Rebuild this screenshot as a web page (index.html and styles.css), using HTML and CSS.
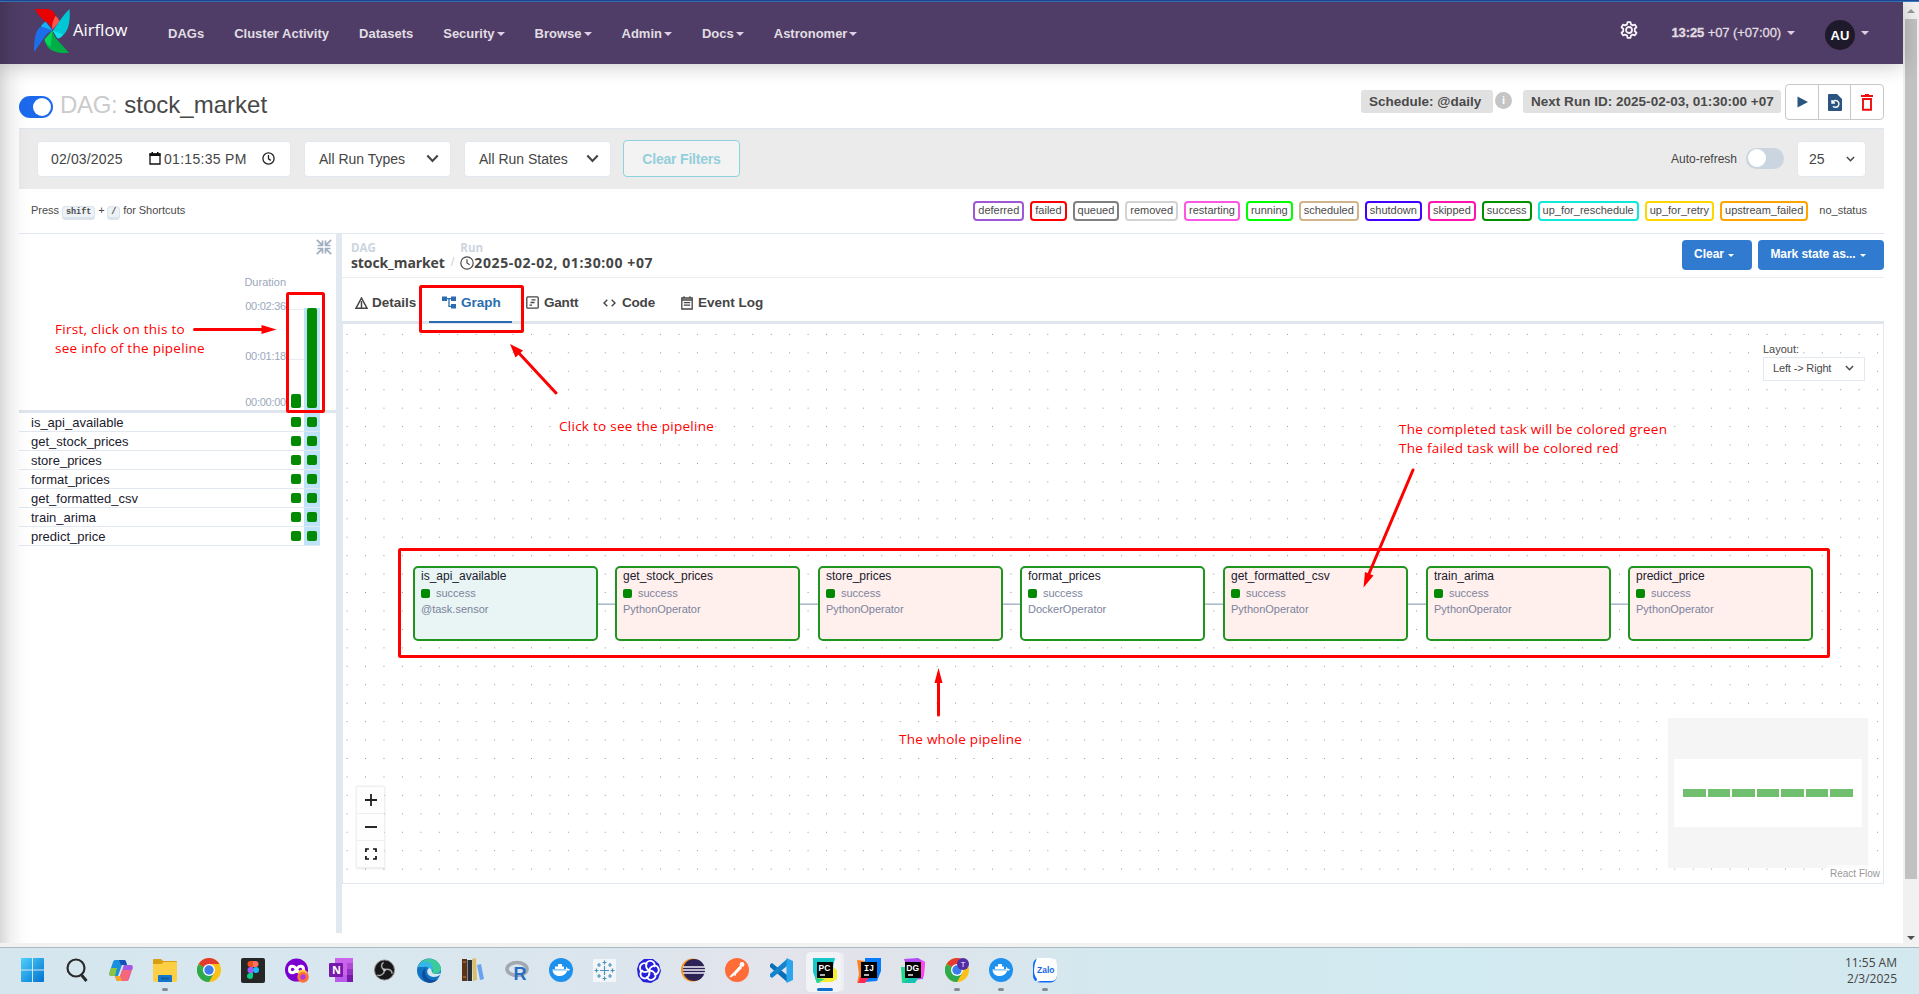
FILE: index.html
```html
<!DOCTYPE html>
<html lang="en">
<head>
<meta charset="utf-8">
<title>stock_market - Graph - Airflow</title>
<link rel="stylesheet" href="styles.css">
</head>
<body>
<svg class="defs" width="0" height="0">
  <symbol id="chev" viewBox="0 0 12 8"><path d="M1.2 1.2 6 6.2l4.800-5" fill="none" stroke="currentColor" stroke-width="2"/></symbol>
  <symbol id="chrome" viewBox="0 0 24 24">
    <circle cx="12" cy="12" r="12" fill="#fbc116"/>
    <path d="M12 12 1.600 6A12 12 0 0 1 22.400 6H12z" fill="#e33b2e"/>
    <path d="M1.600 6A12 12 0 0 0 12 24l5.200-9H6.800z" fill="#2da94f"/>
    <path d="M6.800 9 1.600 6 6.800 15z" fill="#2da94f"/>
    <circle cx="12" cy="12" r="6" fill="#fff"/><circle cx="12" cy="12" r="4.700" fill="#3b7ded"/>
  </symbol>
  <symbol id="docker" viewBox="0 0 24 24">
    <circle cx="12" cy="12" r="12" fill="#1d91ed"/>
    <path d="M3.500 11.500H16c1 0 1.300-.8 1-2.600 1 .4 1.600 1.200 1.700 2 1-.2 1.700 0 2.300.5-.6 1-1.600 1.400-2.800 1.400-1.400 3.700-4.200 5.200-7.700 5.200-4.400 0-6.800-2.500-7-6.500z" fill="#fff"/>
    <path d="M6 8.500h9V11H6zM9 6h4v2.500H9z" fill="#fff"/>
    <path d="M4 12.500h15" stroke="#8cc8f7" stroke-width=".6"/>
  </symbol>
</svg>
<div class="screen">
  <div class="topline"></div>
  <div class="browser">
    <div class="page">
      <nav class="navbar">
        <a class="brand">
          <svg width="37" height="45" viewBox="0 0 37 45">
            <path d="M1 0h13c6 1 8 5 9 9 2 2 3 3 3 4l-7 8C17 13 8 14 1 0z" fill="#e90000"/>
            <path d="M22 7c3 2 4 4 4 6l-7 8c-1-4 0-8 3-14z" fill="#ff554a"/>
            <path d="M36.500 0c1 12-1 22-6 26-2 2-4 4-6 4l-5-8c3-4 9-14 17-22z" fill="#00c7d4"/>
            <path d="M19 22l11 4c-2 3-4 4-6 4z" fill="#11e1ee"/>
            <path d="M36 45c-9 1-18-1-22-6-2-3-3-6-3-8l8-9c1 8 10 14 17 23z" fill="#00ad46"/>
            <path d="M19 22l-2 17c-4-3-6-5-6-8z" fill="#04d659"/>
            <path d="M0 44C0 33 1 22 7 18l12 4C12 24 7 36 0 44z" fill="#1b6fea"/>
            <path d="M7 18c2-3 3-4 5-5l7 9z" fill="#12b0ff"/>
          </svg>
          <span class="brand-name">Airflow</span>
        </a>
        <ul class="menu">
          <li>DAGs</li><li>Cluster Activity</li><li>Datasets</li>
          <li>Security<i class="caret"></i></li><li>Browse<i class="caret"></i></li><li>Admin<i class="caret"></i></li>
          <li>Docs<i class="caret"></i></li><li>Astronomer<i class="caret"></i></li>
        </ul>
        <div class="nav-right">
          <svg class="gear" width="18" height="18" viewBox="0 0 24 24" fill="none" stroke="#f5f2f8" stroke-width="2.400" stroke-linejoin="round"><circle cx="12" cy="12" r="4"/><path d="M10 1.500h4l.6 3 2.400 1.300 3-1 2 3.500-2.300 2v3.400l2.300 2-2 3.500-3-1-2.400 1.300-.6 3h-4l-.6-3L7 18.200l-3 1-2-3.500 2.300-2v-3.400L2 8.300l2-3.500 3 1 2.400-1.300z"/></svg>
          <span class="clock"><b>13:25</b> +07 (+07:00)<i class="caret"></i></span>
          <span class="avatar">AU</span><i class="caret"></i>
        </div>
      </nav>

      <header class="dag-head">
        <div class="dag-name"><span class="switch on"></span><h1><span>DAG:</span> stock_market</h1></div>
        <div class="dag-meta">
          <span class="label sched">Schedule: @daily</span><span class="info">i</span>
          <span class="label next">Next Run ID: 2025-02-03, 01:30:00 +07</span>
          <div class="btn-group">
            <span><svg width="12" height="12" viewBox="0 0 12 12"><path d="M1.500.5 12 6 1.500 11.500z" fill="#2b5580"/></svg></span>
            <span><svg width="14" height="17" viewBox="0 0 14 17"><path d="M1 0h8l5 5v11q0 1-1 1H1q-1 0-1-1V1q0-1 1-1z" fill="#2b5580"/><path d="M4 6v3h3M4.300 8.800A3.400 3.400 0 1 1 5 12.200" fill="none" stroke="#fff" stroke-width="1.400"/></svg></span>
            <span><svg width="12" height="17" viewBox="0 0 12 17"><path d="M0 2h12M4 .8h4M2 5v10.800h8V5z" fill="none" stroke="#f00d0d" stroke-width="1.900"/></svg></span>
          </div>
        </div>
      </header>

      <section class="filters">
        <div class="field when">
          <span class="date">02/03/2025</span>
          <svg width="12" height="13" viewBox="0 0 12 13"><path d="M1 2h10v10H1z" fill="none" stroke="#111" stroke-width="1.300"/><path d="M.5 1.500h11V4H.5zM2.500 0h1.500v2H2.500zM8 0h1.500v2H8z" fill="#111"/></svg>
          <span class="time">01:15:35 PM</span>
          <svg width="13" height="13" viewBox="0 0 13 13" fill="none" stroke="#222" stroke-width="1.300"><circle cx="6.500" cy="6.500" r="5.600"/><path d="M6.500 3v3.800l2.300 1.600"/></svg>
        </div>
        <div class="field sel">All Run Types<svg width="13" height="9"><use href="#chev"/></svg></div>
        <div class="field sel">All Run States<svg width="13" height="9"><use href="#chev"/></svg></div>
        <button class="clear-filters">Clear Filters</button>
        <div class="filters-right">
          <span>Auto-refresh</span><span class="switch off"></span>
          <div class="field num">25<svg width="9" height="6"><use href="#chev"/></svg></div>
        </div>
      </section>

      <section class="legend">
        <div class="hint">Press <kbd>shift</kbd> + <kbd>/</kbd> for Shortcuts</div>
        <div class="badges">
          <span class="b deferred">deferred</span><span class="b failed">failed</span><span class="b queued">queued</span><span class="b removed">removed</span><span class="b restarting">restarting</span><span class="b running">running</span><span class="b scheduled">scheduled</span><span class="b shutdown">shutdown</span><span class="b skipped">skipped</span><span class="b success">success</span><span class="b resched">up_for_reschedule</span><span class="b retry">up_for_retry</span><span class="b upfailed">upstream_failed</span><span class="b none">no_status</span>
        </div>
      </section>

      <main class="main">
        <aside class="grid-panel">
          <svg class="collapse" width="16" height="16" viewBox="0 0 16 16" fill="none" stroke="#a0aec0" stroke-width="1.700"><path d="M.8.8l5.400 5.400M6.500 1.500v5h-5M15.200.8 9.800 6.200M9.500 1.500v5h5M.8 15.200l5.400-5.400M6.500 14.500v-5h-5M15.200 15.200 9.800 9.800M9.500 14.500v-5h5"/></svg>
          <div class="durations">
            <div class="scale"><span>Duration</span><span>00:02:36</span><span>00:01:18</span><span>00:00:00</span></div>
            <div class="bars"><div class="col"><i class="short"></i></div><div class="col sel-col"><i class="tall"></i></div></div>
          </div>
          <ul class="tasks">
            <li><span>is_api_available</span><b></b><b></b></li>
            <li><span>get_stock_prices</span><b></b><b></b></li>
            <li><span>store_prices</span><b></b><b></b></li>
            <li><span>format_prices</span><b></b><b></b></li>
            <li><span>get_formatted_csv</span><b></b><b></b></li>
            <li><span>train_arima</span><b></b><b></b></li>
            <li><span>predict_price</span><b></b><b></b></li>
          </ul>
        </aside>
        <div class="divider"></div>
        <section class="details">
          <div class="crumbs">
            <div class="crumb"><small>DAG</small><strong>stock_market</strong></div>
            <span class="slash">/</span>
            <div class="crumb run-id"><small>Run</small><strong><svg width="14" height="14" viewBox="0 0 14 14" fill="none" stroke="#4a4a4a" stroke-width="1.200"><circle cx="7" cy="7" r="6.200"/><path d="M7 3.200V7l2.600 1.800"/></svg>2025-02-02, 01:30:00 +07</strong></div>
            <div class="actions"><button>Clear<i class="caret"></i></button><button>Mark state as...<i class="caret"></i></button></div>
          </div>
          <div class="tabs">
            <span class="tab t-details"><svg width="13" height="12" viewBox="0 0 13 12"><path d="M6.500 1 12 11.200H1z" fill="none" stroke="#444" stroke-width="1.500"/><path d="M6.500 4v7" stroke="#444" stroke-width="1.500"/></svg>Details</span>
            <span class="tab t-graph"><svg width="14" height="13" viewBox="0 0 14 13"><path d="M0 .5h5V5H0zM9 .5h5V5H9zM9 8h5v4.500H9z" fill="#2b6cb0"/><path d="M5 2.700h4M7 2.700v7.600h2" fill="none" stroke="#2b6cb0" stroke-width="1.300"/></svg>Graph</span>
            <span class="tab t-gantt"><svg width="13" height="13" viewBox="0 0 13 13" fill="none" stroke="#444" stroke-width="1.300"><rect x=".8" y=".8" width="11.400" height="11.400" rx="1"/><path d="M5.500 3.800h4M4.500 6.500h4M3.500 9.200H6"/></svg>Gantt</span>
            <span class="tab t-code"><svg width="13" height="8" viewBox="0 0 13 8" fill="none" stroke="#444" stroke-width="1.400"><path d="M4.300.7 1 4l3.300 3.300M8.700.7 12 4 8.700 7.300"/></svg>Code</span>
            <span class="tab t-event"><svg width="12" height="14" viewBox="0 0 12 14" fill="none" stroke="#444" stroke-width="1.300"><path d="M.8 2h10.400v11H.8zM.8 4h10.400M3 .3v2M9 .3v2M2.800 6.700h6.400M2.800 9.200h6.400"/></svg>Event Log</span>
          </div>
          <div class="canvas">
            <svg class="dots" width="1539" height="559"><defs><pattern id="dotp" x="3.600" y="9.900" width="18.440" height="18.440" patternUnits="userSpaceOnUse"><circle cx=".5" cy=".5" r=".52" fill="#85858c"/></pattern></defs><rect width="1539" height="559" fill="url(#dotp)"/></svg>
            <div class="edge"></div>
            <div class="node sensor n1"><h4>is_api_available</h4><p><i></i>success</p><p>@task.sensor</p></div>
            <div class="node py n2"><h4>get_stock_prices</h4><p><i></i>success</p><p>PythonOperator</p></div>
            <div class="node py n3"><h4>store_prices</h4><p><i></i>success</p><p>PythonOperator</p></div>
            <div class="node dk n4"><h4>format_prices</h4><p><i></i>success</p><p>DockerOperator</p></div>
            <div class="node py n5"><h4>get_formatted_csv</h4><p><i></i>success</p><p>PythonOperator</p></div>
            <div class="node py n6"><h4>train_arima</h4><p><i></i>success</p><p>PythonOperator</p></div>
            <div class="node py n7"><h4>predict_price</h4><p><i></i>success</p><p>PythonOperator</p></div>
            <div class="layout-pick"><label>Layout:</label><div>Left -&gt; Right<svg width="9" height="6"><use href="#chev"/></svg></div></div>
            <div class="controls">
              <span><svg width="12" height="12"><path d="M6 0v12M0 6h12" stroke="#222" stroke-width="1.800"/></svg></span>
              <span><svg width="12" height="12"><path d="M0 6h12" stroke="#111" stroke-width="1.800"/></svg></span>
              <span><svg width="12" height="12" fill="none" stroke="#111" stroke-width="1.700"><path d="M.9 4V1h3M8 1h3v3M11 8v3H8M4 11H.9V8"/></svg></span>
            </div>
            <div class="minimap"><div><i></i><i></i><i></i><i></i><i></i><i></i><i></i></div></div>
            <span class="attrib">React Flow</span>
          </div>
        </section>
      </main>
    </div>
    <div class="scrollbar"><i class="up"></i><i class="thumb"></i><i class="down"></i></div>
  </div>
  <div class="strip"></div>
  <footer class="taskbar">
    <div class="apps">
      <span><svg width="23" height="24" viewBox="0 0 23 24"><defs><linearGradient id="wg" x1="0" y1="0" x2="1" y2="1"><stop offset="0" stop-color="#4fd0fb"/><stop offset="1" stop-color="#0072cf"/></linearGradient></defs><path d="M1 0h10v11.500H0V1q0-1 1-1zM12 0h10q1 0 1 1v10.500H12zM0 12.500h11V24H1q-1 0-1-1zM12 12.500h11V23q0 1-1 1H12z" fill="url(#wg)"/></svg></span>
      <span><svg width="24" height="24" viewBox="0 0 24 24" fill="none" stroke="#2a2a2a" stroke-width="2.200"><circle cx="11" cy="10" r="8.500"/><path d="M16.500 17l5 6" stroke-width="3"/></svg></span>
      <span><svg width="24" height="23" viewBox="0 0 24 23"><path d="M6 1h9c2 0 2 2 3 5h-5L9 17H3c-3 0-3-2-2-5L4 3c.4-1.300 1-2 2-2z" fill="#1a8fdc"/><path d="M2 9h6l-2 8H3c-3 0-3-2-2-5z" fill="#8cc63f"/><path d="M10 1h5c2 0 2 2 3 5h-6z" fill="#1450b8"/><path d="M18 22H9c-2 0-2-2-3-5h5L15 6h6c3 0 3 2 2 5l-3 9c-.4 1.300-1 2-2 2z" fill="#e255a5"/><path d="M6 17h6l2 5H9c-2 0-2-2-3-5z" fill="#f5a623"/><path d="M15 6h6c3 0 3 2 2 5h-9z" fill="#a457e8"/><path d="M11 17l2-6h9l-3 9c-.4 1.300-1 2-2 2h-4z" fill="#f4687a"/></svg></span>
      <span class="run"><svg width="24" height="23" viewBox="0 0 24 23"><path d="M1 0h7l2 2h13q1 0 1 1v8H0V1q0-1 1-1z" fill="#d99d10"/><path d="M0 5h8l3-2h12q1 0 1 1v17q0 2-2 2H2q-2 0-2-2z" fill="#fdcf45"/><path d="M5 23v-6q0-1 1-1h12q1 0 1 1v6z" fill="#1277cc"/><path d="M8 19.500h8" stroke="#0b5596" stroke-width="1.500"/></svg></span>
      <span><svg width="24" height="24"><use href="#chrome"/></svg></span>
      <span><svg width="24" height="25" viewBox="0 0 24 25"><rect width="24" height="25" rx="2" fill="#262626"/><path d="M12 3H9.500a3 3 0 0 0 0 6H12z" fill="#f24e1e"/><path d="M12 3h2.500a3 3 0 0 1 0 6H12z" fill="#ff7262"/><path d="M12 9H9.500a3 3 0 0 0 0 6H12z" fill="#a259ff"/><circle cx="15" cy="12" r="3" fill="#1abcfe"/><path d="M12 15H9.500a3 3 0 1 0 2.500 3z" fill="#0acf83"/></svg></span>
      <span><svg width="24" height="25" viewBox="0 0 24 25"><circle cx="11.500" cy="12" r="11.500" fill="#7b00cf"/><path d="M11.500 11.500C9 7 4.500 7.500 4.500 11.500s4.500 4.500 7 0 7-4 7 0-4.500 4.500-7 0z" fill="none" stroke="#fff" stroke-width="3"/><circle cx="18" cy="19" r="5.800" fill="#ff7139"/><circle cx="18" cy="19" r="2.700" fill="#b23be0"/><path d="M13 15q5-5 9 0" stroke="#ffcf36" stroke-width="2" fill="none"/></svg></span>
      <span><svg width="24" height="24" viewBox="0 0 24 24"><path d="M6 0h18v24H6z" fill="#ca64ea"/><path d="M18 5h6v6h-6z" fill="#ae4bd5"/><path d="M18 11h6v6h-6z" fill="#9332bf"/><path d="M18 17h6v7h-6z" fill="#7719aa"/><path d="M6 17h12v7H6z" fill="#b75be8"/><rect y="5" width="14" height="14" rx="1" fill="#7719aa"/><text x="3" y="16" font-family="Open Sans" font-weight="700" font-size="11" fill="#fff">N</text></svg></span>
      <span><svg width="21" height="22" viewBox="0 0 22 22"><circle cx="11" cy="11" r="10.500" fill="#17171a" stroke="#888" /><path d="M11 11C7 9 7 5 10 3M11 11c4-2 8 0 8 4M11 11c0 4-4 7-7.500 5" fill="none" stroke="#a8a8a8" stroke-width="1.500"/><circle cx="11" cy="11" r="1.500" fill="#c8c8c8"/></svg></span>
      <span><svg width="24" height="25" viewBox="0 0 24 25"><circle cx="12" cy="12.500" r="12" fill="#1173c4"/><path d="M1 9C4-1 20-3 24 10c0 6-6 7-9 5 2-4-2-8-6-7-4 0-7 1-8 1z" fill="#3ccb9a"/><path d="M1 9c3-7 11-7 14-2 1 2 1 5-1 7-1-4-4-6-7-5z" fill="#36b5e8"/><path d="M9 10c-3 4 0 12 7 12 3 0 5-1 6-2-2 3-6 5-10 5-8-2-9-12-3-15z" fill="#0d4d9b"/><path d="M12 10c-4 3-1 9 5 9 2 0 4-1 6-2l1-2c-4 2-9 1-9-1-1-2 0-3-3-4z" fill="#d6e8f2"/></svg></span>
      <span><svg width="22" height="24" viewBox="0 0 22 24"><path d="M0 1h5v22H0z" fill="#5c3317"/><path d="M1 4h3M1 19h3M6 5h3M6 19h3" stroke="#c58b45"/><path d="M5.500 2h4.500v21H5.500z" fill="#27303a"/><path d="M10 1l4-1 1 22-4 1z" fill="#d9bd6c"/><path d="M15 7l4-1 3 15-4 1z" fill="#6ba2f0"/></svg></span>
      <span><svg width="24" height="25" viewBox="0 -2 24 25"><ellipse cx="12" cy="9" rx="10" ry="6.500" fill="none" stroke="#a2a8b0" stroke-width="3.600"/><text x="8.500" y="19.500" font-family="Liberation Sans" font-weight="700" font-size="18" fill="#276dc3">R</text></svg></span>
      <span><svg width="24" height="24"><use href="#docker"/></svg></span>
      <span><svg width="23" height="23" viewBox="0 0 23 23"><path d="M0 0h23v23H0z" fill="#f3f6f8"/><path d="M11.500 7v9M7 11.500h9M11.500 1.500v4M9.500 3.500h4M11.500 17.500v4M9.500 19.500h4M1.500 11.500h4M3.500 9.500v4M17.500 11.500h4M19.500 9.500v4M6 4v4M4 6h4M17 4v4M15 6h4M6 15v4M4 17h4M17 15v4M15 17h4" stroke="#4c93bd" stroke-width="1.200"/></svg></span>
      <span><svg width="24" height="25" viewBox="0 0 24 25"><path d="M7 1h9l6 5 2 7-3 8-7 4-8-1-5-6-1-7 2-6z" fill="#2420dc"/><g fill="none" stroke="#fff" stroke-width="1.800"><path id="petal" d="M12 12.500C8 10 8 4 12 3s7 3 5 6"/><use href="#petal" transform="rotate(72 12 12.500)"/><use href="#petal" transform="rotate(144 12 12.500)"/><use href="#petal" transform="rotate(216 12 12.500)"/><use href="#petal" transform="rotate(288 12 12.500)"/></g></svg></span>
      <span><svg width="24" height="24" viewBox="0 0 24 24"><circle cx="11.500" cy="12" r="11.500" fill="#f7941e"/><circle cx="13" cy="12" r="11" fill="#2c2255"/><path d="M2 9h22M2 12h22M2 15h22" stroke="#f2eef8" stroke-width="1.700"/></svg></span>
      <span><svg width="24" height="24" viewBox="0 0 24 24"><circle cx="12" cy="12" r="12" fill="#ff6c37"/><circle cx="17" cy="6.500" r="2.400" fill="#fff"/><path d="M15 8l1.500 2-5 5L6 19l-1-.5 5-5zM11 15l-1 3" fill="#fff" stroke="#fff"/></svg></span>
      <span><svg width="24" height="25" viewBox="0 0 24 25"><path d="M1 6.500 3 5l15 12v7L1 9z" fill="#0b6fb5"/><path d="M1 18.500 3 20 18 8V1L1 16z" fill="#1384cd"/><path d="M17.500 0 24 3v19l-6.500 3z" fill="#2aa5ee"/></svg></span>
      <span class="active"><svg width="24" height="25" viewBox="0 0 24 25"><path d="M0 0h22l-2 9 4 4v8L4 25 0 14z" fill="#16c6c9"/><path d="M18 8l6 4v9l-5 3H6l-3-4z" fill="#f4ec35"/><path d="M2 20l10 1-8 4z" fill="#21d789"/><path d="M4 4h16v16H4z" fill="#000"/><text x="5.500" y="13" font-family="Liberation Sans" font-weight="700" font-size="8.500" fill="#fff">PC</text><path d="M7 17h5" stroke="#fff" stroke-width="1.400"/></svg></span>
      <span><svg width="24" height="25" viewBox="0 0 24 25"><path d="M0 2l8 1 1 20-9 2 2-9z" fill="#fc801d"/><path d="M8 0h16v13l-4 10-12 1z" fill="#087cfa"/><path d="M4 18h9l-5 7H1z" fill="#fe2857"/><path d="M4 4h16v16H4z" fill="#000"/><text x="7" y="13" font-family="Liberation Mono" font-weight="700" font-size="8.500" fill="#fff">IJ</text><path d="M7 17h5" stroke="#fff" stroke-width="1.400"/></svg></span>
      <span><svg width="24" height="25" viewBox="0 0 24 25"><path d="M3 1l14-1 7 4-2 17-12 1z" fill="#b24cf5"/><path d="M0 9h9v15l-8 1z" fill="#22d88f"/><path d="M8 20l10-1-4 6H2z" fill="#14c3b0"/><path d="M20 2l4 2-1 14-4 3z" fill="#ff45ed"/><path d="M4 4h16v16H4z" fill="#000"/><text x="5.300" y="13" font-family="Liberation Sans" font-weight="700" font-size="8.500" fill="#fff">DG</text><path d="M7 17h5" stroke="#fff" stroke-width="1.400"/></svg></span>
      <span class="run"><svg width="24" height="24" viewBox="0 0 24 24"><use href="#chrome"/><circle cx="18" cy="6" r="6" fill="#512da8"/><text x="15.800" y="8.700" font-family="Liberation Sans" font-size="7.500" fill="#fff">T</text></svg></span>
      <span class="run"><svg width="24" height="24"><use href="#docker"/></svg></span>
      <span class="run"><svg width="24" height="25" viewBox="0 0 24 25"><rect width="24" height="24.500" rx="6.500" fill="#0a68fe"/><path d="M4 0h14q6 0 6 6v11q0 6-6 6H8l-5 1 1-3Q1 18 1 12T4 0z" fill="#fff"/><text x="4" y="15" font-family="Liberation Sans" font-weight="700" font-size="8.500" fill="#1569e8">Zalo</text></svg></span>
    </div>
    <div class="tray"><span>11:55 AM</span><span>2/3/2025</span></div>
  </footer>

  <svg class="marks" width="1919" height="994" fill="none" stroke="#f00" stroke-width="3">
    <rect x="287.500" y="293.500" width="36" height="118" rx="1"/>
    <rect x="420.500" y="286.500" width="102" height="45" rx="1"/>
    <rect x="399.500" y="549.500" width="1429" height="107" rx="1"/>
    <path d="M194.500 329.500H264M556 393 517 351M938.500 715V680M1413 470l-45 106" stroke-linecap="round"/>
    <path d="M276.500 329.500l-15-4.500v9zM510 344l5.500 13.500 7.500-7zM938.500 668l-4 15h8zM1363.500 587.500l1.500-15.500 8.500 3.500z" fill="#f00" stroke="none"/>
  </svg>
  <div class="note note-a">First, click on this to<br>see info of the pipeline</div>
  <div class="note note-b">Click to see the pipeline</div>
  <div class="note note-c">The whole pipeline</div>
  <div class="note note-d">The completed task will be colored green<br>The failed task will be colored red</div>
</div>
</body>
</html>
```
FILE: styles.css
```css
* { box-sizing: border-box; }
body { margin: 0; font-family: "Liberation Sans", Arial, sans-serif; color: #4a4a4a; }
ul, h1, h4, p { margin: 0; padding: 0; list-style: none; }
h1, h4 { font-weight: 400; }
svg { display: block; flex: none; }
button { font-family: inherit; }
.defs { position: absolute; }
.screen { position: relative; width: 1919px; height: 994px; overflow: hidden; display: flex; flex-direction: column; background: #fff; }
.topline { height: 2px; background: linear-gradient(#1c4ba0 50%, #3c78b8 50%); flex: none; }
.browser { display: flex; height: 941px; flex: none; }
.page { position: relative; width: 1903px; display: flex; flex-direction: column; }
.page::after { content: ""; position: absolute; left: 0; top: 0; bottom: 0; width: 30px; pointer-events: none; background: linear-gradient(90deg, rgba(0,0,0,.15), rgba(0,0,0,.06) 35%, rgba(0,0,0,.015) 70%, transparent); }
.caret { display: inline-block; border: 4px solid transparent; border-top-color: currentColor; border-bottom: 0; margin-left: 2px; vertical-align: 2px; }

.navbar { height: 62px; flex: none; background: #4f3d67; display: flex; align-items: center; color: #e1dde2; font-size: 13px; font-weight: 700; box-shadow: 0 2px 20px rgba(0,0,0,.22); position: relative; }
.navbar .caret { color: #e0cfe4; }
.brand { display: flex; width: 134px; margin-left: 34px; align-items: center; height: 62px; padding-bottom: 7px; }
.brand svg { width: 36px; height: 44px; margin-top: 3px; }
.brand-name { font: 400 16.700px "Open Sans", sans-serif; color: #fff; margin-left: 3px; }
.menu { display: flex; gap: 30px; }
.nav-right { margin-left: auto; display: flex; align-items: center; padding-right: 34px; }
.gear { margin: 0 33px 6px 0; }
.clock { font-weight: 400; letter-spacing: -.1px; -webkit-text-stroke: .3px; margin: 0 30px 1px 0; }
.clock .caret { margin-left: 6px; }
.avatar { width: 30px; height: 30px; border-radius: 50%; background: #1f1a2b; color: #fff; font: 700 13px/31px "Liberation Sans"; text-align: center; margin-top: 3px; }
.nav-right > .caret { margin-left: 6px; }

.dag-head { height: 64px; flex: none; display: flex; justify-content: space-between; padding: 0 19px 0 19px; }
.dag-name { display: flex; align-items: flex-start; padding-top: 26px; }
.dag-name .switch { margin-top: 6px; }
.dag-name h1 { font-size: 24px; line-height: 29px; margin-left: 7px; color: #484848; letter-spacing: .02px; }
.dag-name h1 span { color: #cbcbcb; letter-spacing: -.3px; }
.switch { display: block; border-radius: 12px; position: relative; }
.switch::after { content: ""; position: absolute; background: #fff; border-radius: 50%; }
.switch.on { width: 34px; height: 22px; background: #1c69ee; }
.switch.on::after { width: 18px; height: 18px; right: 2px; top: 2px; }
.switch.off { width: 38px; height: 21px; background: #cbd5e0; margin: 0 13px 0 9px; }
.switch.off::after { width: 18px; height: 18px; left: 2px; top: 1px; }
.dag-meta { display: flex; align-items: flex-start; }
.label { height: 23px; margin-top: 26px; background: #e1e1e1; border-radius: 3px; font: 700 13.500px/23px "Liberation Sans"; color: #4a4a4a; white-space: nowrap; }
.sched { width: 132px; padding-left: 8px; }
.next { width: 258px; padding-left: 8px; letter-spacing: .02px; }
.info { width: 17px; height: 17px; border-radius: 50%; background: #c5c5c5; color: #fff; font: 700 11px/17px "Liberation Sans"; text-align: center; margin: 28px 11px 0 2px; }
.btn-group { display: flex; margin: 20px 0 0 4px; border: 1px solid #c8c8c8; border-radius: 4px; height: 36px; width: 99px; }
.btn-group span { flex: 1; display: flex; align-items: center; justify-content: center; }
.btn-group span + span { border-left: 1px solid #c8c8c8; }

.filters { height: 61px; flex: none; margin: 0 19px; background: #ebebeb; border-top: 1px solid #dfe6ee; display: flex; align-items: center; padding: 0 18px; color: #454545; font-size: 14px; padding-bottom: 1px; }
.field { background: #fff; border: 1px solid #e2e8f0; border-radius: 4px; height: 36px; display: flex; align-items: center; }
.when { width: 254px; padding-left: 13px; }
.date { width: 98px; letter-spacing: .15px; }
.time { margin-left: 3px; width: 98px; letter-spacing: .3px; }
.sel { width: 147px; margin-left: 13px; padding: 0 11px 0 14px; justify-content: space-between; }
.clear-filters { width: 117px; height: 37px; margin: 0 0 0 12px; border: 1px solid #8ad3df; border-radius: 4px; background: #f3f3f3; color: #93cfdb; font-size: 14px; font-weight: 700; letter-spacing: -.2px; }
.filters-right { margin-left: auto; display: flex; align-items: center; font-size: 12px; }
.num { width: 69px; font-size: 14px; justify-content: space-between; padding: 0 10px 0 11px; }

.legend { height: 44px; flex: none; display: flex; justify-content: space-between; align-items: center; padding: 0 31px; font-size: 11px; white-space: nowrap; }
.hint { padding-bottom: 1px; word-spacing: -.3px; }
kbd { font: 700 8.500px "Liberation Mono", monospace; background: #edf2f7; border: 1px solid #dbe3ec; border-bottom-width: 3px; border-radius: 4px; padding: 0 3px; }
.badges { display: flex; gap: 6px; }
.b { border: 2px solid; border-radius: 4px; height: 20px; line-height: 15px; padding: 0 3px; }
.b.deferred { border-color: #9d57d8; } .b.failed { border-color: #f00; } .b.queued { border-color: #808080; }
.b.removed { border-color: #d3d3d3; } .b.restarting { border-color: #fb57e3; } .b.running { border-color: #0f0; }
.b.scheduled { border-color: #d2b48c; } .b.shutdown { border-color: #4400ff; } .b.skipped { border-color: #ff14ac; }
.b.success { border-color: #009000; } .b.resched { border-color: #10e8d8; } .b.retry { border-color: #ffd700; }
.b.upfailed { border-color: #ffa500; } .b.none { border-color: transparent; }

.main { display: flex; flex: 1; margin: 0 19px; border-top: 1px solid #e2e8f0; min-height: 0; }
.grid-panel { width: 317px; flex: none; }
.collapse { margin: 5px 0 0 297px; }
.durations { display: flex; height: 158px; border-bottom: 3px solid #dfe5ef; font-size: 11px; color: #9aa7bb; }
.scale { width: 285px; padding-right: 18px; text-align: right; display: flex; flex-direction: column; height: 152px; letter-spacing: -.25px; }
.scale span { line-height: 14px; }
.scale span:nth-child(1) { margin-top: 20px; letter-spacing: 0; }
.scale span:nth-child(2) { margin-top: 10px; }
.scale span:nth-child(3) { margin-top: 36px; }
.scale span:nth-child(4) { margin-top: 32px; }
.bars { display: flex; height: 102px; margin: 53px 0 0 -16px; align-self: flex-start; background: linear-gradient(transparent 1px, #e8edf3 1px 2px, transparent 2px 51px, #e8edf3 51px 52px, transparent 52px 98px, #e8edf3 98px 99px, transparent 99px); }
.col { width: 16px; height: 102px; display: flex; align-items: flex-end; justify-content: center; }
.sel-col { background: #bee3f8; }
.col i { width: 10px; background: #028b02; border-radius: 2px; margin-bottom: 2px; }
.short { height: 14px; }
.tall { height: 100px; }
.tasks li { height: 19px; width: 301px; border-bottom: 1px solid #e2e8f0; display: flex; align-items: center; font-size: 13px; color: #1a202c; background: linear-gradient(#bee3f8, #bee3f8) right / 16px 100% no-repeat; padding-right: 3px; gap: 6px; }
.tasks li span { flex: 1; padding-left: 12px; }
.tasks b { width: 10px; height: 10px; border-radius: 2px; background: #028b02; }
.divider { width: 6px; background: #e2e8f0; height: 699px; flex: none; }

.details { flex: 1; min-width: 0; }
.crumbs { height: 44px; border-bottom: 1px solid #e9edf2; display: flex; padding: 6px 0 0 9px; }
.crumb { display: flex; flex-direction: column; font-family: "Open Sans", sans-serif; }
.crumb small { font-size: 11.500px; line-height: 15px; font-weight: 700; color: #cbd5e0; }
.crumb strong { font-size: 14px; line-height: 15px; font-weight: 700; display: flex; align-items: center; color: #454545; white-space: nowrap; letter-spacing: -.1px; }
.run-id strong { letter-spacing: .6px; }
.slash { color: #cbd5e0; font-size: 13px; margin: 14px 6px 0 6px; }
.actions { margin-left: auto; display: flex; gap: 6px; }
.actions button { height: 30px; border: 0; border-radius: 4px; background: #307bd0; color: #fff; font-size: 12px; font-weight: 700; padding: 0 17px 2px 11px; letter-spacing: -.05px; white-space: nowrap; }
.actions button:first-child { width: 70px; }
.actions button:last-child { width: 126px; }
.actions .caret { border-width: 3.500px; border-bottom: 0; margin-left: 4px; vertical-align: 1px; }
.tabs { height: 46px; border-bottom: 3px solid #dfe6ee; display: flex; font-size: 13.500px; font-weight: 700; color: #454545; padding-left: 13px; }
.tab { display: flex; align-items: center; height: 45px; padding-top: 4px; white-space: nowrap; gap: 4px; }
.t-details { width: 74px; }
.t-graph { width: 83px; padding-left: 13px; color: #2b6cb0; border-bottom: 2px solid #2b6cb0; padding-top: 6px; gap: 5px; }
.t-gantt { width: 91px; padding-left: 14px; letter-spacing: -.2px; gap: 5px; }
.t-code { width: 78px; gap: 6px; letter-spacing: -.2px; }
.t-event { gap: 5px; }
.canvas { position: relative; height: 560px; border: solid #e2e8f0; border-width: 0 1px 1px; }
.dots { position: absolute; left: 0; top: 0; }
.edge { position: absolute; left: 80px; top: 279px; width: 1300px; height: 2px; background: linear-gradient(#cdd5e0 50%, #aeb9c9 50%); }
.node { position: absolute; top: 242px; width: 185px; height: 75px; border: 2px solid #1f951f; border-radius: 5px; padding: 1px 0 0 6px; }
.sensor { background: #e8f5f4; } .py { background: #ffefed; } .dk { background: #fff; }
.n1 { left: 70px; } .n2 { left: 272px; } .n3 { left: 475px; } .n4 { left: 677px; } .n5 { left: 880px; } .n6 { left: 1083px; } .n7 { left: 1285px; }
.node h4 { font-size: 12px; line-height: 15px; color: #1a202c; }
.node p { font-size: 11px; line-height: 16px; color: #7b849c; display: flex; align-items: center; }
.node h4 + p { margin-top: 1px; }
.node i { width: 9px; height: 9px; border-radius: 2px; background: #028b02; margin-right: 6px; }
.layout-pick { position: absolute; left: 1420px; top: 18px; font-size: 11px; }
.layout-pick label { display: block; line-height: 14px; margin-bottom: 1px; }
.layout-pick div { width: 102px; height: 24px; border: 1px solid #e2e8f0; background: #fff; display: flex; align-items: center; justify-content: space-between; padding: 0 10px 2px 9px; letter-spacing: -.15px; }
.controls { position: absolute; left: 14px; top: 463px; width: 27px; box-shadow: 0 0 2px 1px rgba(0,0,0,.09); }
.controls span { display: flex; align-items: center; justify-content: center; height: 27px; background: #fefefe; border-bottom: 1px solid #eee; }
.minimap { position: absolute; left: 1325px; top: 394px; width: 200px; height: 150px; background: #f5f5f5; padding: 41px 6px; }
.minimap div { height: 68px; background: #fff; display: flex; gap: 2px; align-items: center; padding: 0 9px; }
.minimap i { flex: 1; height: 8px; background: #6fbf6f; }
.attrib { position: absolute; right: 0; bottom: 0; font-size: 10px; line-height: 14px; padding: 2px 3px; color: #999; background: rgba(255,255,255,.6); }

.scrollbar { width: 16px; background: #f1f1f1; display: flex; flex-direction: column; align-items: center; }
.up { border: 4px solid transparent; border-top: 0; border-bottom-color: #999; margin: 7px 0 6px; }
.thumb { width: 12px; height: 860px; background: #c1c1c1; }
.down { border: 4px solid transparent; border-bottom: 0; border-top-color: #505050; margin-top: auto; margin-bottom: 3px; }
.strip { height: 4px; flex: none; background: #f2f2f2; }
.taskbar { height: 47px; border-top: 1px solid #a9b9c0; background: linear-gradient(90deg, #d5e6ef 0, #d9e7ef 20%, #dbe5ed 32%, #e3e4ec 40%, #e2e3ea 45%, #d3e8ef 58%, #d2eaf1 75%, #d3e8ef); display: flex; justify-content: space-between; }
.apps { display: flex; padding-left: 11px; }
.apps > span { width: 44px; height: 46px; display: flex; align-items: center; justify-content: center; padding: 0 1px 2px 0; position: relative; }
.apps .run::after, .apps .active::after { content: ""; position: absolute; bottom: 3px; left: 19px; width: 6px; height: 3px; border-radius: 2px; background: #858b90; }
.apps .active { z-index: 0; }
.apps .active::before { content: ""; position: absolute; left: 3px; top: 4px; width: 35px; height: 40px; border-radius: 4px; background: #f1f3f7; box-shadow: 4px 0 0 -1px #eceef3, 0 0 1px #c8ccd4; z-index: -1; }
.apps .active::after { left: 14px; width: 16px; background: #0b70cf; }
.tray { display: flex; flex-direction: column; text-align: right; font: 12px/16px "Open Sans", sans-serif; padding: 7px 22px 0 0; color: #444; }
.marks { position: absolute; left: 0; top: 0; }
.note { position: absolute; color: #f00; font: 13.500px/19px "Open Sans", sans-serif; white-space: nowrap; letter-spacing: .27px; }
.note-a { left: 55px; top: 320px; }
.note-b { left: 559px; top: 417px; }
.note-c { left: 899px; top: 730px; }
.note-d { left: 1399px; top: 420px; }
```
